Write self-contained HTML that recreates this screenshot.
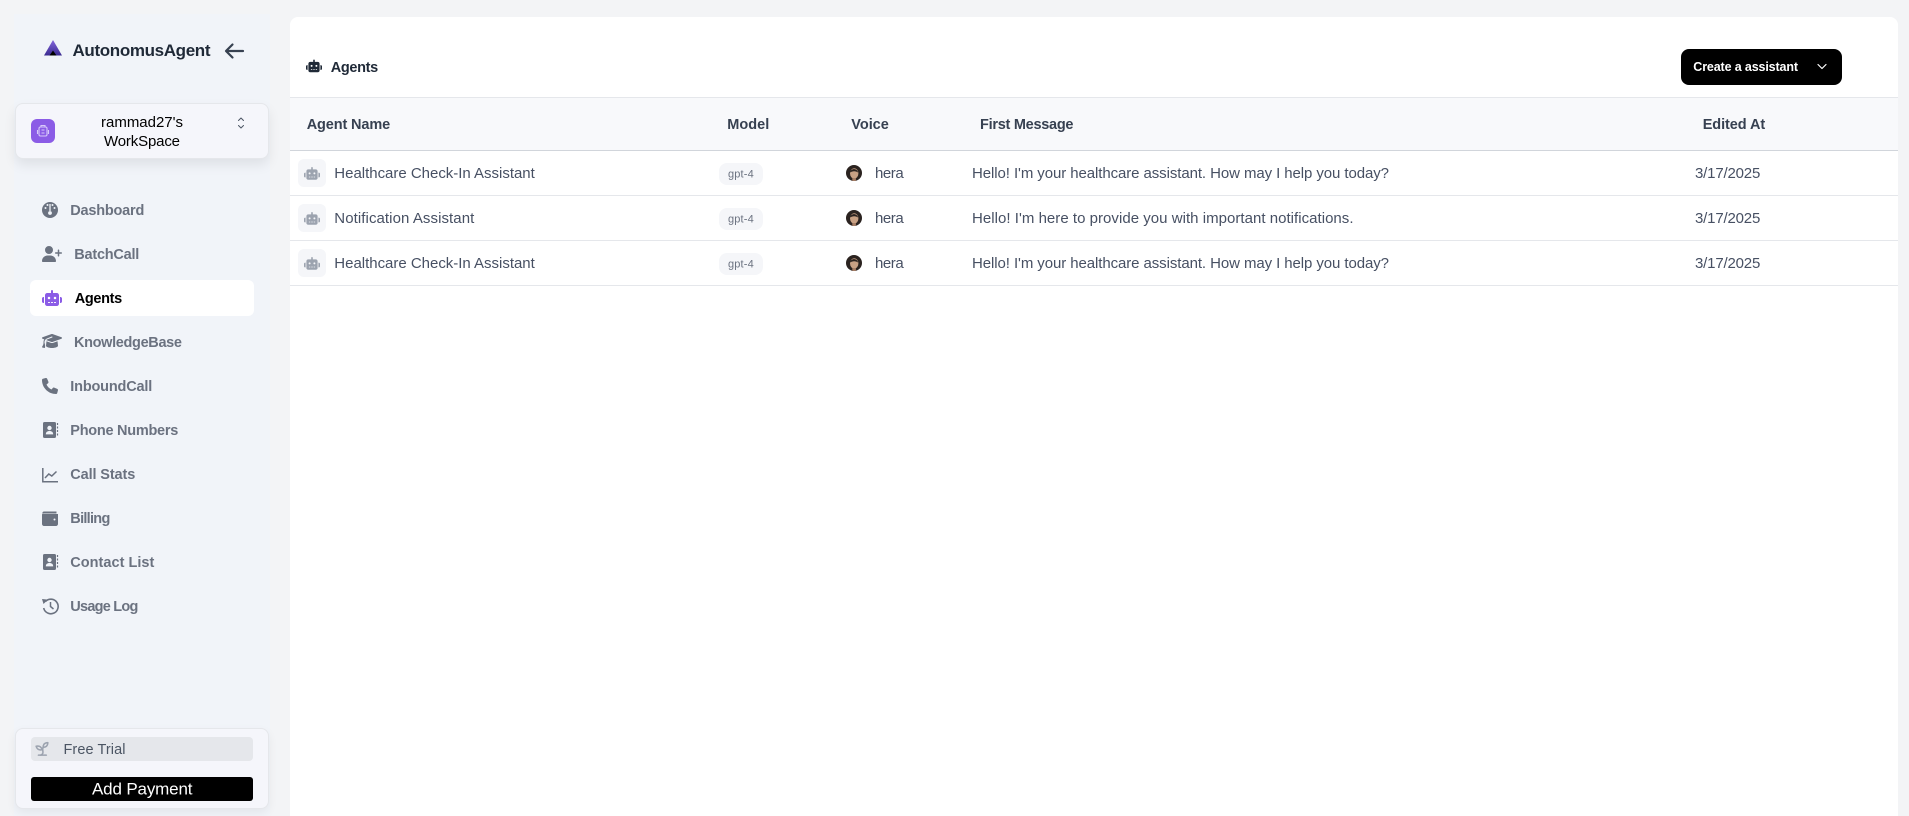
<!DOCTYPE html>
<html><head><meta charset="utf-8"><title>Agents</title>
<style>
html,body{margin:0;padding:0;width:1909px;height:816px;overflow:hidden;background:#f3f4f6;font-family:"Liberation Sans",sans-serif}
.a{position:absolute;box-sizing:border-box}
svg{position:absolute;left:0;top:0}
text{font-family:"Liberation Sans",sans-serif}
.nav{font-size:14.5px;font-weight:700;fill:#6b7280}
.th{font-size:14.5px;font-weight:700;fill:#374151}
.td{font-size:15px;fill:#475063}
.chip{font-size:11px;fill:#6b7280}
</style></head><body>
<div class="a" style="left:14px;top:14px;width:256px;height:802px;background:#f1f4f9"></div>
<div class="a" style="left:290px;top:17px;width:1608px;height:799px;background:#fff;border-radius:8px 8px 0 0"></div>
<div class="a" style="left:290px;top:97px;width:1608px;height:54px;background:#f8f9fb;border-top:1px solid #e5e7eb;border-bottom:1px solid #d1d5db"></div>
<div class="a" style="left:290px;top:195px;width:1608px;height:1px;background:#e5e7eb"></div>
<div class="a" style="left:290px;top:240px;width:1608px;height:1px;background:#e5e7eb"></div>
<div class="a" style="left:290px;top:285px;width:1608px;height:1px;background:#e5e7eb"></div>
<div class="a" style="left:15px;top:103px;width:254px;height:56px;background:#f5f6fb;border:1px solid #e5e7eb;border-radius:8px;box-shadow:0 6px 12px rgba(0,0,0,.08)"></div>
<div class="a" style="left:31px;top:119px;width:24px;height:24px;background:#8b5ce6;border-radius:6px"></div>
<div class="a" style="left:30px;top:280px;width:224px;height:36px;background:#fff;border-radius:6px"></div>
<div class="a" style="left:15px;top:728px;width:254px;height:81px;background:#f5f6fb;border:1px solid #e5e7eb;border-radius:8px;box-shadow:0 4px 10px rgba(0,0,0,.06)"></div>
<div class="a" style="left:31px;top:737px;width:222px;height:24px;background:#e5e7eb;border-radius:4px"></div>
<div class="a" style="left:31px;top:777px;width:222px;height:24px;background:#000;border-radius:3px"></div>
<div class="a" style="left:1681px;top:49px;width:161px;height:36px;background:#000;border-radius:8px"></div>
<div class="a" style="left:298px;top:159px;width:28px;height:28px;background:#f5f6f9;border-radius:6px"></div>
<div class="a" style="left:298px;top:204px;width:28px;height:28px;background:#f5f6f9;border-radius:6px"></div>
<div class="a" style="left:298px;top:249px;width:28px;height:28px;background:#f5f6f9;border-radius:6px"></div>
<div class="a" style="left:719px;top:163px;width:44px;height:22px;background:#f5f6f9;border-radius:8px"></div>
<div class="a" style="left:719px;top:208px;width:44px;height:22px;background:#f5f6f9;border-radius:8px"></div>
<div class="a" style="left:719px;top:253px;width:44px;height:22px;background:#f5f6f9;border-radius:8px"></div>

<svg width="1909" height="816" viewBox="0 0 1909 816" xmlns="http://www.w3.org/2000/svg">
<defs>
<linearGradient id="lg" x1="0" y1="0" x2="0" y2="1"><stop offset="0" stop-color="#8566dd"/><stop offset="1" stop-color="#3a2a90"/></linearGradient>
<clipPath id="av"><circle cx="8" cy="8" r="8"/></clipPath>
<path id="robot" d="M320 0c17.7 0 32 14.3 32 32V96H472c39.8 0 72 32.2 72 72V440c0 39.8-32.2 72-72 72H168c-39.8 0-72-32.2-72-72V168c0-39.8 32.2-72 72-72H288V32c0-17.7 14.3-32 32-32zM208 384c-8.8 0-16 7.2-16 16s7.2 16 16 16h32c8.8 0 16-7.2 16-16s-7.2-16-16-16H208zm96 0c-8.8 0-16 7.2-16 16s7.2 16 16 16h32c8.8 0 16-7.2 16-16s-7.2-16-16-16H304zm96 0c-8.8 0-16 7.2-16 16s7.2 16 16 16h32c8.8 0 16-7.2 16-16s-7.2-16-16-16H400zM264 256a40 40 0 1 0 -80 0 40 40 0 1 0 80 0zm152 40a40 40 0 1 0 0-80 40 40 0 1 0 0 80zM48 224H64V416H48c-26.5 0-48-21.5-48-48V272c0-26.5 21.5-48 48-48zm544 0c26.5 0 48 21.5 48 48v96c0 26.5-21.5 48-48 48H576V224h16z"/>
<g id="avatar"><g clip-path="url(#av)"><rect width="16" height="16" fill="#2b2320"/><ellipse cx="8.2" cy="8.4" rx="4.2" ry="5.2" fill="#c9a184"/><path d="M4 7.500C4.500 3 11.500 3 12 7.500 10 5.800 6.500 5.800 4 7.500z" fill="#2b2320"/><rect x="6.300" y="13" width="3.600" height="3" fill="#a87f66"/></g></g>
<g id="card"><rect x="1" y="0" width="13" height="16" rx="1.6" fill="#6b7280"/><circle cx="7.5" cy="6" r="2.2" fill="#f1f4f9"/><path d="M3.8 12.4c0-2.4 1.6-3.4 3.7-3.4s3.7 1 3.7 3.4z" fill="#f1f4f9"/><path d="M15.5 1v14" stroke="#6b7280" stroke-width="1.2" stroke-dasharray="2 1.5"/></g>
</defs>

<!-- logo -->
<path d="M53 40 L62 55.5 H44 Z" fill="url(#lg)"/>
<path d="M53 50.5 L56.5 55.5 H49.5 Z" fill="#000"/>
<text x="72.5" y="56" font-size="17" font-weight="700" fill="#1f2937" textLength="138" lengthAdjust="spacing">AutonomusAgent</text>
<path d="M243 51H226.5M232.5 44.5 226 51l6.500 6.500" fill="none" stroke="#374151" stroke-width="2.2" stroke-linecap="round" stroke-linejoin="round"/>

<!-- workspace -->
<g fill="none" stroke="#d8c9fa" stroke-width="1.1"><rect x="39" y="127" width="8" height="9" rx="1.5"/><path d="M41 127v-1.500h4V127M37.500 130v4M48.500 130v4M41.500 130h3M41.500 133h3"/></g>
<text x="101" y="127" font-size="15" fill="#000" textLength="82" lengthAdjust="spacing">rammad27's</text>
<text x="104" y="146" font-size="15" fill="#000" textLength="76" lengthAdjust="spacing">WorkSpace</text>
<path d="M238.500 120.500l2.500-2.500 2.500 2.500M238.500 125.500l2.500 2.500 2.500-2.500" fill="none" stroke="#4b5563" stroke-width="1" stroke-linecap="round" stroke-linejoin="round"/>

<!-- nav icons -->
<circle cx="50" cy="210" r="8" fill="#6b7280"/>
<g fill="#f1f4f9"><circle cx="45.500" cy="208" r="1"/><circle cx="47.500" cy="205" r="1"/><circle cx="52.500" cy="205" r="1"/><circle cx="54.500" cy="208" r="1"/></g>
<path d="M50 204v7" stroke="#f1f4f9" stroke-width="1.300"/><circle cx="50" cy="213" r="1.900" fill="#f1f4f9"/>
<path transform="translate(42 246) scale(.03125)" fill="#6b7280" d="M96 128a128 128 0 1 1 256 0A128 128 0 1 1 96 128zM0 482.300C0 383.800 79.800 304 178.300 304h91.400C368.200 304 448 383.800 448 482.300c0 16.400-13.300 29.700-29.700 29.700H29.700C13.300 512 0 498.700 0 482.300zM504 312V248H440c-13.300 0-24-10.700-24-24s10.700-24 24-24h64V136c0-13.300 10.700-24 24-24s24 10.700 24 24v64h64c13.300 0 24 10.700 24 24s-10.700 24-24 24H552v64c0 13.300-10.700 24-24 24s-24-10.700-24-24z"/>
<use href="#robot" transform="translate(42 290) scale(.03125)" fill="#8b5ce6"/>
<path transform="translate(42 333) scale(.03125)" fill="#6b7280" d="M320 32c-8.100 0-16.100 1.400-23.700 4.100L15.800 137.400C6.300 140.900 0 149.900 0 160s6.300 19.100 15.800 22.600l57.900 20.900C57.300 229.300 48 259.800 48 291.900v28.100c0 28.400-10.800 57.700-22.300 80.800c-6.500 13-13.900 25.800-22.500 37.600C0 442.700-.9 448.300 .9 453.400s6 8.900 11.200 10.200l64 16c4.200 1.100 8.700 .3 12.400-2s6.300-6.100 7.100-10.400c8.600-42.800 4.300-81.200-2.100-108.700C90.300 344.300 86 329.800 80 316.500V291.900c0-30.200 10.200-58.700 27.900-81.500c12.900-15.500 29.600-28 49.200-35.700l157-61.700c8.200-3.200 17.500 .8 20.700 9s-.8 17.500-9 20.700l-157 61.700c-12.400 4.900-23.300 12.400-32.200 21.600l159.600 57.600c7.600 2.700 15.600 4.100 23.700 4.100s16.100-1.400 23.700-4.100L624.200 182.600c9.500-3.400 15.800-12.500 15.800-22.600s-6.300-19.100-15.800-22.600L343.700 36.100C336.100 33.400 328.100 32 320 32zM128 408c0 35.300 86 72 192 72s192-36.700 192-72L496.700 262.600 354.500 314c-11.100 4-22.800 6-34.500 6s-23.500-2-34.500-6L143.300 262.600 128 408z"/>
<path transform="translate(42 378) scale(.03125)" fill="#6b7280" d="M164.900 24.600c-7.700-18.600-28-28.500-47.400-23.200l-88 24C12.100 30.200 0 46 0 64C0 311.400 200.600 512 448 512c18 0 33.800-12.100 38.600-29.500l24-88c5.300-19.400-4.600-39.700-23.200-47.400l-96-40c-16.300-6.800-35.200-2.100-46.300 11.600L304.700 368C234.300 334.700 177.300 277.700 144 207.300L193.300 167c13.700-11.200 18.400-30 11.600-46.300l-40-96z"/>
<use href="#card" transform="translate(42 422)"/>
<path d="M42.800 468v13.800H58M45 478l3.800-4 3 2 4.700-4.500" fill="none" stroke="#6b7280" stroke-width="1.500"/>
<path d="M44 511.500h12.500v2H42.300c.1-1.200.6-2 1.700-2z" fill="#6b7280"/>
<path d="M44 514h14v10c0 1.100-.9 2-2 2H44c-1.100 0-2-.9-2-2v-9c0-1.500.9-1 2-1z" fill="#6b7280"/><circle cx="54.500" cy="519.500" r="1" fill="#f1f4f9"/>
<use href="#card" transform="translate(42 554)"/>
<path d="M45.500 601.500a7.300 7.300 0 1 1-1.800 6.500" fill="none" stroke="#6b7280" stroke-width="1.600"/><path d="M42 599l6 .6-4.500 4.400z" fill="#6b7280"/><path d="M50.500 602v4.500l3 2.500" fill="none" stroke="#6b7280" stroke-width="1.500"/>

<!-- nav text -->
<text class="nav" x="70.300" y="215" textLength="74" lengthAdjust="spacing">Dashboard</text>
<text class="nav" x="74.300" y="259" textLength="65" lengthAdjust="spacing">BatchCall</text>
<text class="nav" x="74.700" y="303" textLength="47.500" lengthAdjust="spacing" style="fill:#000">Agents</text>
<text class="nav" x="74" y="347" textLength="108" lengthAdjust="spacing">KnowledgeBase</text>
<text class="nav" x="70.300" y="391" textLength="82" lengthAdjust="spacing">InboundCall</text>
<text class="nav" x="70.300" y="435" textLength="108" lengthAdjust="spacing">Phone Numbers</text>
<text class="nav" x="70.300" y="479" textLength="65" lengthAdjust="spacing">Call Stats</text>
<text class="nav" x="70.300" y="523" textLength="40" lengthAdjust="spacing">Billing</text>
<text class="nav" x="70.300" y="567" textLength="84" lengthAdjust="spacing">Contact List</text>
<text class="nav" x="70.300" y="611" textLength="68" lengthAdjust="spacing">Usage Log</text>

<!-- bottom card -->
<g transform="translate(33 739.500) scale(.78)" fill="none" stroke="#9ca3af" stroke-width="2" stroke-linecap="round" stroke-linejoin="round"><path d="M7 20h10"/><path d="M10 20c5.500-2.500.8-6.400 3-10"/><path d="M9.500 9.400c1.100.8 1.800 2.200 2.300 3.700-2 .4-3.500.4-4.800-.3-1.200-.6-2.300-1.900-3-4.200 2.800-.5 4.400 0 5.500.8z"/><path d="M14.100 6a7 7 0 0 0-1.100 4c1.900-.1 3.300-.6 4.300-1.400 1-1 1.600-2.300 1.700-4.600-2.700.1-4 1-4.900 2z"/></g>
<text x="63.500" y="754" font-size="14.500" fill="#4b5563" textLength="62" lengthAdjust="spacing">Free Trial</text>
<text x="92" y="794.500" font-size="17" fill="#fff" textLength="100.500" lengthAdjust="spacing">Add Payment</text>

<!-- header -->
<use href="#robot" transform="translate(306 59.500) scale(.025)" fill="#1f2937"/>
<text x="330.700" y="72" font-size="14.500" font-weight="700" fill="#1f2937" textLength="47.500" lengthAdjust="spacing">Agents</text>
<text x="1693.300" y="71" font-size="12.500" font-weight="700" fill="#fff" textLength="104.700" lengthAdjust="spacing">Create a assistant</text>
<path d="M1818 64.500l4 4 4-4" fill="none" stroke="#fff" stroke-width="1.200" stroke-linecap="round" stroke-linejoin="round"/>

<!-- table header -->
<text class="th" x="306.700" y="129" textLength="83.500" lengthAdjust="spacing">Agent Name</text>
<text class="th" x="727.300" y="129" textLength="42" lengthAdjust="spacing">Model</text>
<text class="th" x="851.300" y="129" textLength="37.500" lengthAdjust="spacing">Voice</text>
<text class="th" x="980" y="129" textLength="93.500" lengthAdjust="spacing">First Message</text>
<text class="th" x="1702.700" y="129" textLength="62.500" lengthAdjust="spacing">Edited At</text>

<!-- row 1 -->
<use href="#robot" transform="translate(304 167) scale(.025)" fill="#9ca3af"/>
<text class="td" x="334.300" y="178" textLength="200.500" lengthAdjust="spacing">Healthcare Check-In Assistant</text>
<text class="chip" x="728" y="177.500" textLength="25.700" lengthAdjust="spacing">gpt-4</text>
<use href="#avatar" transform="translate(846 165)"/>
<text class="td" x="875" y="178" textLength="28.700" lengthAdjust="spacing">hera</text>
<text class="td" x="972" y="178" textLength="417" lengthAdjust="spacing">Hello! I'm your healthcare assistant. How may I help you today?</text>
<text class="td" x="1695" y="178" textLength="65.300" lengthAdjust="spacing">3/17/2025</text>
<!-- row 2 -->
<use href="#robot" transform="translate(304 212) scale(.025)" fill="#9ca3af"/>
<text class="td" x="334.300" y="223" textLength="140" lengthAdjust="spacing">Notification Assistant</text>
<text class="chip" x="728" y="222.500" textLength="25.700" lengthAdjust="spacing">gpt-4</text>
<use href="#avatar" transform="translate(846 210)"/>
<text class="td" x="875" y="223" textLength="28.700" lengthAdjust="spacing">hera</text>
<text class="td" x="972" y="223" textLength="381.500" lengthAdjust="spacing">Hello! I'm here to provide you with important notifications.</text>
<text class="td" x="1695" y="223" textLength="65.300" lengthAdjust="spacing">3/17/2025</text>
<!-- row 3 -->
<use href="#robot" transform="translate(304 257) scale(.025)" fill="#9ca3af"/>
<text class="td" x="334.300" y="268" textLength="200.500" lengthAdjust="spacing">Healthcare Check-In Assistant</text>
<text class="chip" x="728" y="267.500" textLength="25.700" lengthAdjust="spacing">gpt-4</text>
<use href="#avatar" transform="translate(846 255)"/>
<text class="td" x="875" y="268" textLength="28.700" lengthAdjust="spacing">hera</text>
<text class="td" x="972" y="268" textLength="417" lengthAdjust="spacing">Hello! I'm your healthcare assistant. How may I help you today?</text>
<text class="td" x="1695" y="268" textLength="65.300" lengthAdjust="spacing">3/17/2025</text>
</svg>
</body></html>
